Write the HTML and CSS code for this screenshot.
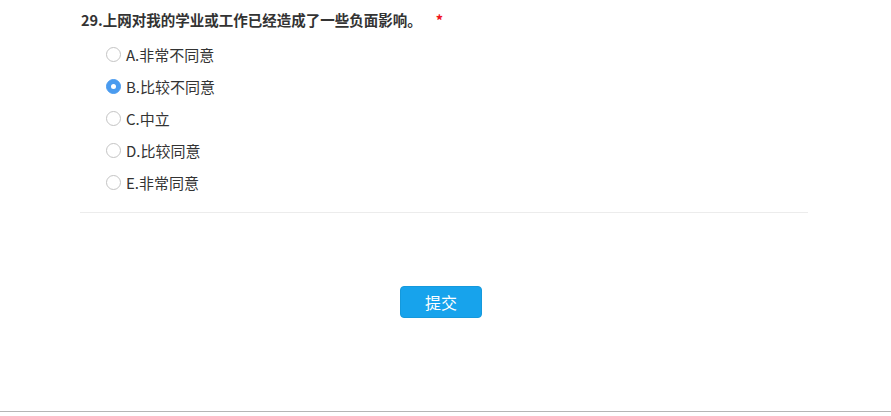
FILE: index.html
```html
<!DOCTYPE html>
<html lang="zh-CN">
<head>
    <meta charset="UTF-8">
    <meta name="viewport" content="width=device-width, initial-scale=1.0">
    <title>问卷</title>
    <link rel="stylesheet" href="styles.css">
</head>
<body>
    <div class="page">
        <div class="question">
            <div class="q-title">29.上网对我的学业或工作已经造成了一些负面影响。<span class="req">*</span></div>
            <div class="options">
                <label class="option"><span class="radio"></span>A.非常不同意</label>
                <label class="option"><span class="radio checked"></span>B.比较不同意</label>
                <label class="option"><span class="radio"></span>C.中立</label>
                <label class="option"><span class="radio"></span>D.比较同意</label>
                <label class="option"><span class="radio"></span>E.非常同意</label>
            </div>
        </div>
        <div class="submit-row">
            <a class="submit-btn">提交</a>
        </div>
    </div>
</body>
</html>
```

FILE: styles.css
```css
body {
    margin: 0;
    background: #fff;
    font-family: "Noto Sans CJK SC", "Liberation Sans", sans-serif;
    color: #333;
}
.page {
    height: 411px;
    border-bottom: 1px solid #b5b5b5;
}
.question {
    margin-left: 80px;
    width: 728px;
    padding-top: 10px;
    border-bottom: 1px solid #ececec;
    padding-bottom: 14px;
}
.q-title {
    font-size: 14.5px;
    font-weight: bold;
    line-height: 20px;
    padding-left: 1px;
}
.req {
    color: #f0141e;
    margin-left: 14px;
}
.options {
    margin-top: 8px;
    padding-left: 26px;
}
.option {
    display: flex;
    align-items: center;
    height: 32px;
    font-size: 15px;
    color: #333;
}
.radio {
    width: 13px;
    height: 13px;
    border: 1px solid #c4c4c4;
    border-radius: 50%;
    margin-right: 5px;
    box-sizing: content-box;
}
.radio.checked {
    border-color: #4a9bef;
    background: #4a9bef;
    position: relative;
}
.radio.checked::after {
    content: "";
    position: absolute;
    left: 4px;
    top: 4px;
    width: 5px;
    height: 5px;
    border-radius: 50%;
    background: #fff;
}
.submit-row {
    display: flex;
    justify-content: center;
    padding-top: 73px;
    padding-right: 9px;
}
.submit-btn {
    width: 82px;
    height: 32px;
    line-height: 30px;
    text-align: center;
    background: #17a3ec;
    border-radius: 4px;
    box-sizing: border-box;
    border: 1px solid #1599dc;
    color: #fff;
    font-size: 16px;
}
```
